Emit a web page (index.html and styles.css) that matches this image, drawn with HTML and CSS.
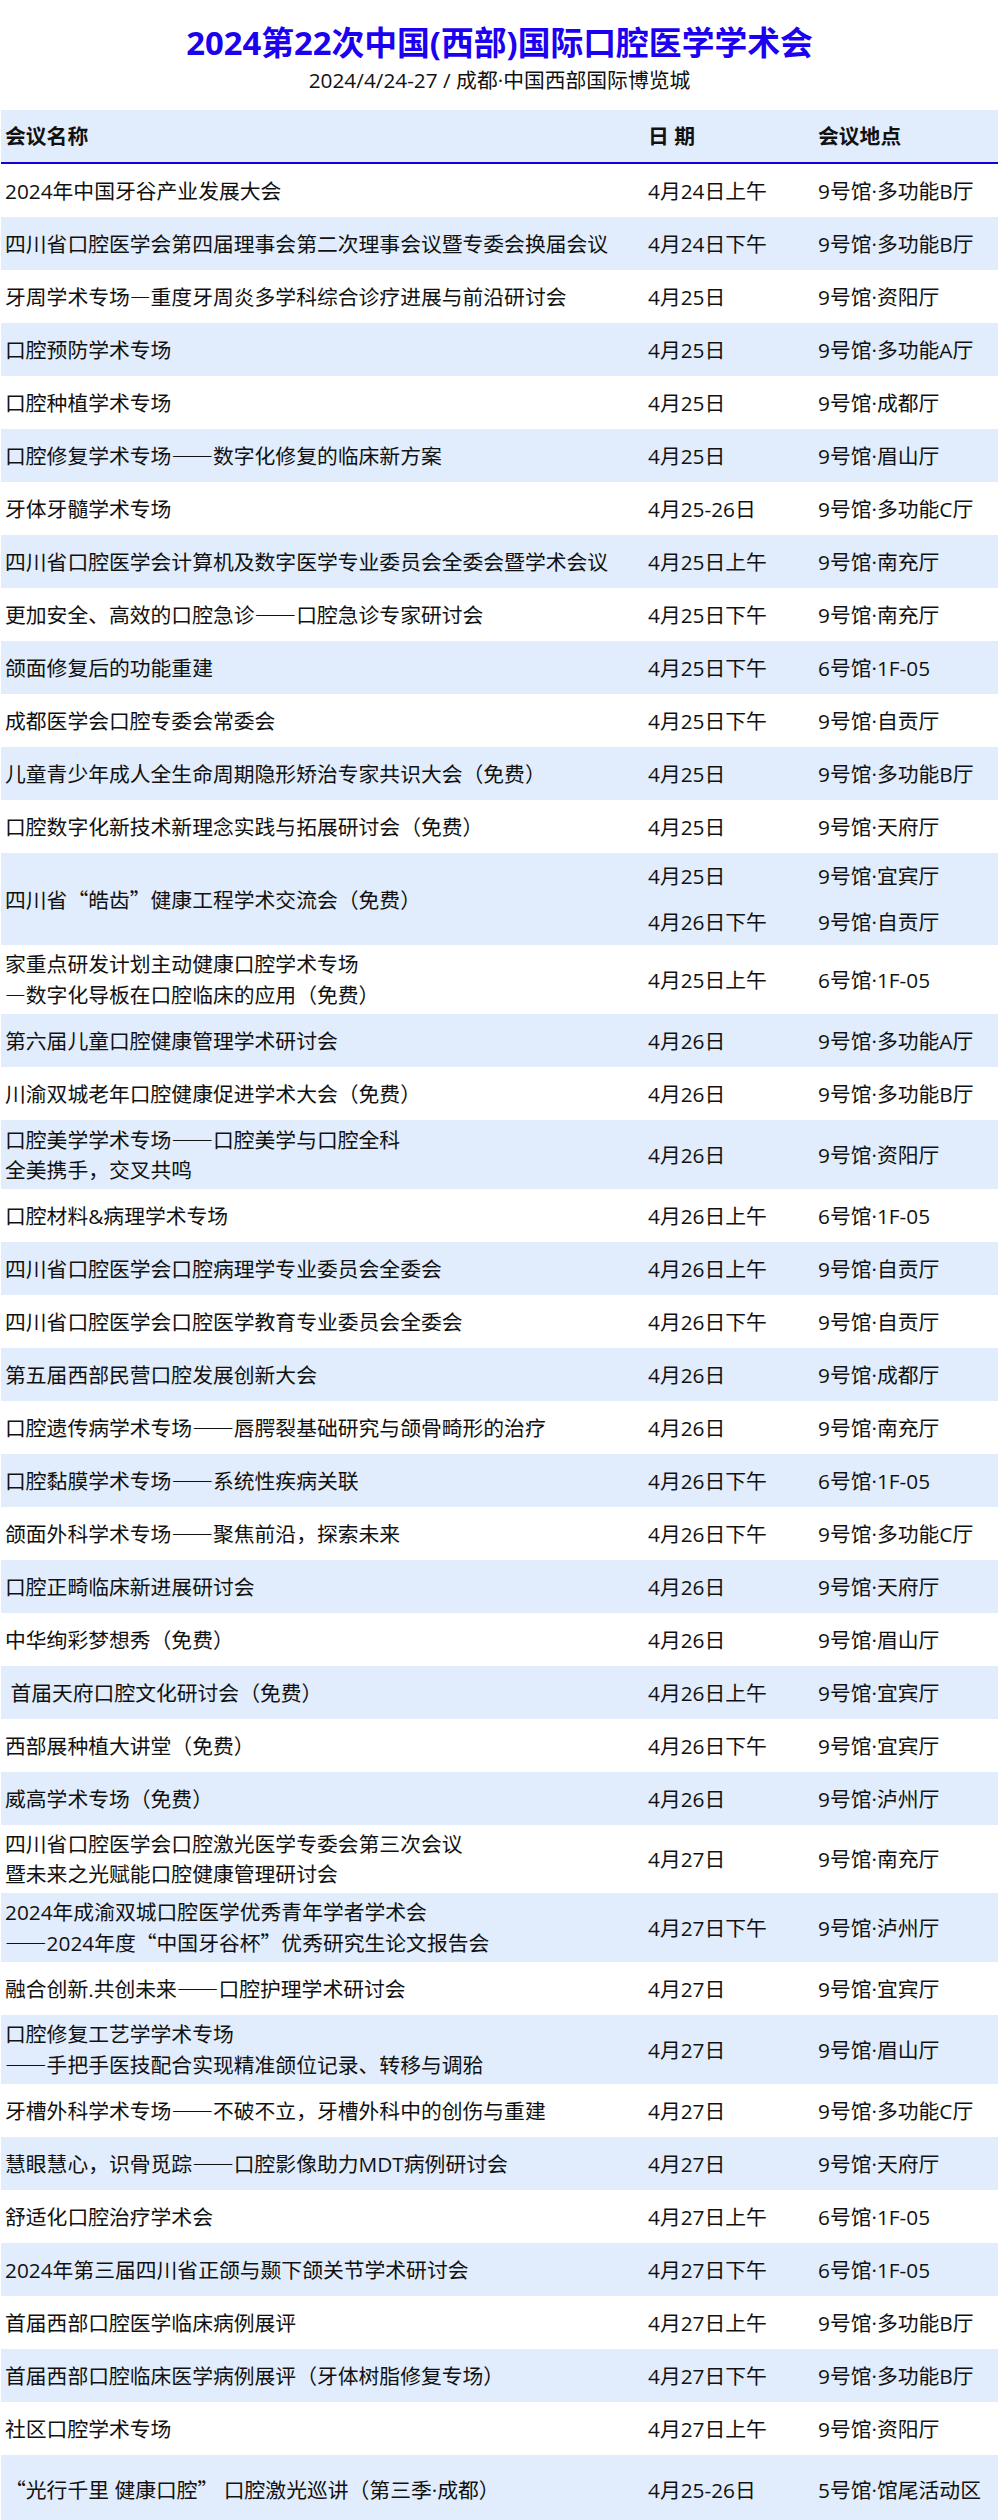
FILE: index.html
```html
<!DOCTYPE html>
<html lang="zh-CN">
<head>
<meta charset="utf-8">
<title>2024第22次中国(西部)国际口腔医学学术会</title>
<link rel="stylesheet" href="styles.css">
</head>
<body>
<div class="page">
  <header class="head">
    <h1 class="title">2024第22次中国(西部)国际口腔医学学术会</h1>
    <p class="sub">2024/4/24-27 / 成都·中国西部国际博览城</p>
  </header>
  <div class="table">
    <div class="row th">
      <div class="c name">会议名称</div>
      <div class="c date">日&nbsp;期</div>
      <div class="c loc">会议地点</div>
    </div>
    <div class="rows">
      <div class="row"><div class="c name">2024年中国牙谷产业发展大会</div><div class="c date">4月24日上午</div><div class="c loc">9号馆·多功能B厅</div></div>
      <div class="row"><div class="c name">四川省口腔医学会第四届理事会第二次理事会议暨专委会换届会议</div><div class="c date">4月24日下午</div><div class="c loc">9号馆·多功能B厅</div></div>
      <div class="row"><div class="c name">牙周学术专场<span class="dash">—</span>重度牙周炎多学科综合诊疗进展与前沿研讨会</div><div class="c date">4月25日</div><div class="c loc">9号馆·资阳厅</div></div>
      <div class="row"><div class="c name">口腔预防学术专场</div><div class="c date">4月25日</div><div class="c loc">9号馆·多功能A厅</div></div>
      <div class="row"><div class="c name">口腔种植学术专场</div><div class="c date">4月25日</div><div class="c loc">9号馆·成都厅</div></div>
      <div class="row"><div class="c name">口腔修复学术专场<span class="dash">——</span>数字化修复的临床新方案</div><div class="c date">4月25日</div><div class="c loc">9号馆·眉山厅</div></div>
      <div class="row"><div class="c name">牙体牙髓学术专场</div><div class="c date">4月25-26日</div><div class="c loc">9号馆·多功能C厅</div></div>
      <div class="row"><div class="c name">四川省口腔医学会计算机及数字医学专业委员会全委会暨学术会议</div><div class="c date">4月25日上午</div><div class="c loc">9号馆·南充厅</div></div>
      <div class="row"><div class="c name">更加安全、高效的口腔急诊<span class="dash">——</span>口腔急诊专家研讨会</div><div class="c date">4月25日下午</div><div class="c loc">9号馆·南充厅</div></div>
      <div class="row"><div class="c name">颌面修复后的功能重建</div><div class="c date">4月25日下午</div><div class="c loc">6号馆·1F-05</div></div>
      <div class="row"><div class="c name">成都医学会口腔专委会常委会</div><div class="c date">4月25日下午</div><div class="c loc">9号馆·自贡厅</div></div>
      <div class="row"><div class="c name">儿童青少年成人全生命周期隐形矫治专家共识大会（免费）</div><div class="c date">4月25日</div><div class="c loc">9号馆·多功能B厅</div></div>
      <div class="row"><div class="c name">口腔数字化新技术新理念实践与拓展研讨会（免费）</div><div class="c date">4月25日</div><div class="c loc">9号馆·天府厅</div></div>
      <div class="row split"><div class="c name">四川省<span class="cq">“</span>皓齿<span class="cq">”</span>健康工程学术交流会（免费）</div><div class="c date"><div class="sl">4月25日</div><div class="sl">4月26日下午</div></div><div class="c loc"><div class="sl">9号馆·宜宾厅</div><div class="sl">9号馆·自贡厅</div></div></div>
      <div class="row"><div class="c name">家重点研发计划主动健康口腔学术专场<br><span class="dash">—</span>数字化导板在口腔临床的应用（免费）</div><div class="c date">4月25日上午</div><div class="c loc">6号馆·1F-05</div></div>
      <div class="row"><div class="c name">第六届儿童口腔健康管理学术研讨会</div><div class="c date">4月26日</div><div class="c loc">9号馆·多功能A厅</div></div>
      <div class="row"><div class="c name">川渝双城老年口腔健康促进学术大会（免费）</div><div class="c date">4月26日</div><div class="c loc">9号馆·多功能B厅</div></div>
      <div class="row"><div class="c name">口腔美学学术专场<span class="dash">——</span>口腔美学与口腔全科<br>全美携手，交叉共鸣</div><div class="c date">4月26日</div><div class="c loc">9号馆·资阳厅</div></div>
      <div class="row"><div class="c name">口腔材料&amp;病理学术专场</div><div class="c date">4月26日上午</div><div class="c loc">6号馆·1F-05</div></div>
      <div class="row"><div class="c name">四川省口腔医学会口腔病理学专业委员会全委会</div><div class="c date">4月26日上午</div><div class="c loc">9号馆·自贡厅</div></div>
      <div class="row"><div class="c name">四川省口腔医学会口腔医学教育专业委员会全委会</div><div class="c date">4月26日下午</div><div class="c loc">9号馆·自贡厅</div></div>
      <div class="row"><div class="c name">第五届西部民营口腔发展创新大会</div><div class="c date">4月26日</div><div class="c loc">9号馆·成都厅</div></div>
      <div class="row"><div class="c name">口腔遗传病学术专场<span class="dash">——</span>唇腭裂基础研究与颌骨畸形的治疗</div><div class="c date">4月26日</div><div class="c loc">9号馆·南充厅</div></div>
      <div class="row"><div class="c name">口腔黏膜学术专场<span class="dash">——</span>系统性疾病关联</div><div class="c date">4月26日下午</div><div class="c loc">6号馆·1F-05</div></div>
      <div class="row"><div class="c name">颌面外科学术专场<span class="dash">——</span>聚焦前沿，探索未来</div><div class="c date">4月26日下午</div><div class="c loc">9号馆·多功能C厅</div></div>
      <div class="row"><div class="c name">口腔正畸临床新进展研讨会</div><div class="c date">4月26日</div><div class="c loc">9号馆·天府厅</div></div>
      <div class="row"><div class="c name">中华绚彩梦想秀（免费）</div><div class="c date">4月26日</div><div class="c loc">9号馆·眉山厅</div></div>
      <div class="row"><div class="c name">&nbsp;首届天府口腔文化研讨会（免费）</div><div class="c date">4月26日上午</div><div class="c loc">9号馆·宜宾厅</div></div>
      <div class="row"><div class="c name">西部展种植大讲堂（免费）</div><div class="c date">4月26日下午</div><div class="c loc">9号馆·宜宾厅</div></div>
      <div class="row"><div class="c name">威高学术专场（免费）</div><div class="c date">4月26日</div><div class="c loc">9号馆·泸州厅</div></div>
      <div class="row"><div class="c name">四川省口腔医学会口腔激光医学专委会第三次会议<br>暨未来之光赋能口腔健康管理研讨会</div><div class="c date">4月27日</div><div class="c loc">9号馆·南充厅</div></div>
      <div class="row"><div class="c name">2024年成渝双城口腔医学优秀青年学者学术会<br><span class="dash">——</span>2024年度<span class="cq">“</span>中国牙谷杯<span class="cq">”</span>优秀研究生论文报告会</div><div class="c date">4月27日下午</div><div class="c loc">9号馆·泸州厅</div></div>
      <div class="row"><div class="c name">融合创新.共创未来<span class="dash">——</span>口腔护理学术研讨会</div><div class="c date">4月27日</div><div class="c loc">9号馆·宜宾厅</div></div>
      <div class="row"><div class="c name">口腔修复工艺学学术专场<br><span class="dash">——</span>手把手医技配合实现精准颌位记录、转移与调𬌗</div><div class="c date">4月27日</div><div class="c loc">9号馆·眉山厅</div></div>
      <div class="row"><div class="c name">牙槽外科学术专场<span class="dash">——</span>不破不立，牙槽外科中的创伤与重建</div><div class="c date">4月27日</div><div class="c loc">9号馆·多功能C厅</div></div>
      <div class="row"><div class="c name">慧眼慧心，识骨觅踪<span class="dash">——</span>口腔影像助力MDT病例研讨会</div><div class="c date">4月27日</div><div class="c loc">9号馆·天府厅</div></div>
      <div class="row"><div class="c name">舒适化口腔治疗学术会</div><div class="c date">4月27日上午</div><div class="c loc">6号馆·1F-05</div></div>
      <div class="row"><div class="c name">2024年第三届四川省正颌与颞下颌关节学术研讨会</div><div class="c date">4月27日下午</div><div class="c loc">6号馆·1F-05</div></div>
      <div class="row"><div class="c name">首届西部口腔医学临床病例展评</div><div class="c date">4月27日上午</div><div class="c loc">9号馆·多功能B厅</div></div>
      <div class="row"><div class="c name">首届西部口腔临床医学病例展评（牙体树脂修复专场）</div><div class="c date">4月27日下午</div><div class="c loc">9号馆·多功能B厅</div></div>
      <div class="row"><div class="c name">社区口腔学术专场</div><div class="c date">4月27日上午</div><div class="c loc">9号馆·资阳厅</div></div>
      <div class="row last"><div class="c name"><span class="cq">“</span>光行千里 健康口腔<span class="cq">”</span> 口腔激光巡讲（第三季·成都）</div><div class="c date">4月25-26日</div><div class="c loc">5号馆·馆尾活动区</div></div>
    </div>
  </div>
</div>
</body>
</html>
```

FILE: styles.css
```css
* {
  box-sizing: border-box;
}

html, body {
  margin: 0;
  padding: 0;
  background: #ffffff;
}

body {
  font-family: "Open Sans", "Noto Sans CJK SC", sans-serif;
  color: #111111;
  font-size: 20.8px;
}

.page {
  width: 999px;
}

.head {
  padding-top: 23px;
  text-align: center;
}

.title {
  margin: 0;
  font-size: 32.8px;
  line-height: 40px;
  font-weight: 700;
  color: #1c00f0;
}

.sub {
  margin: 2px 0 0;
  font-size: 20.8px;
  line-height: 30px;
  color: #111111;
}

.table {
  margin: 15px 0 0 1px;
  width: 997px;
}

.row {
  display: grid;
  grid-template-columns: 643px 170px 1fr;
  align-items: center;
  min-height: 53px;
  padding: 4px 0;
  line-height: 30px;
}

.rows .row:nth-child(even) {
  background: #e1edfc;
}

.row.th {
  background: #e1edfc;
  font-weight: 700;
  min-height: 54px;
  border-bottom: 2px solid #1a00d8;
}

.row.split {
  padding: 0;
}

.row.last {
  min-height: 69px;
}

.c {
  padding-left: 4px;
  white-space: nowrap;
}

.sl {
  height: 46px;
  line-height: 46px;
}

.cq {
  font-family: "Noto Sans CJK SC", sans-serif;
}

.dash {
  font-family: "Noto Sans CJK SC", sans-serif;
  font-weight: 700;
}
```
